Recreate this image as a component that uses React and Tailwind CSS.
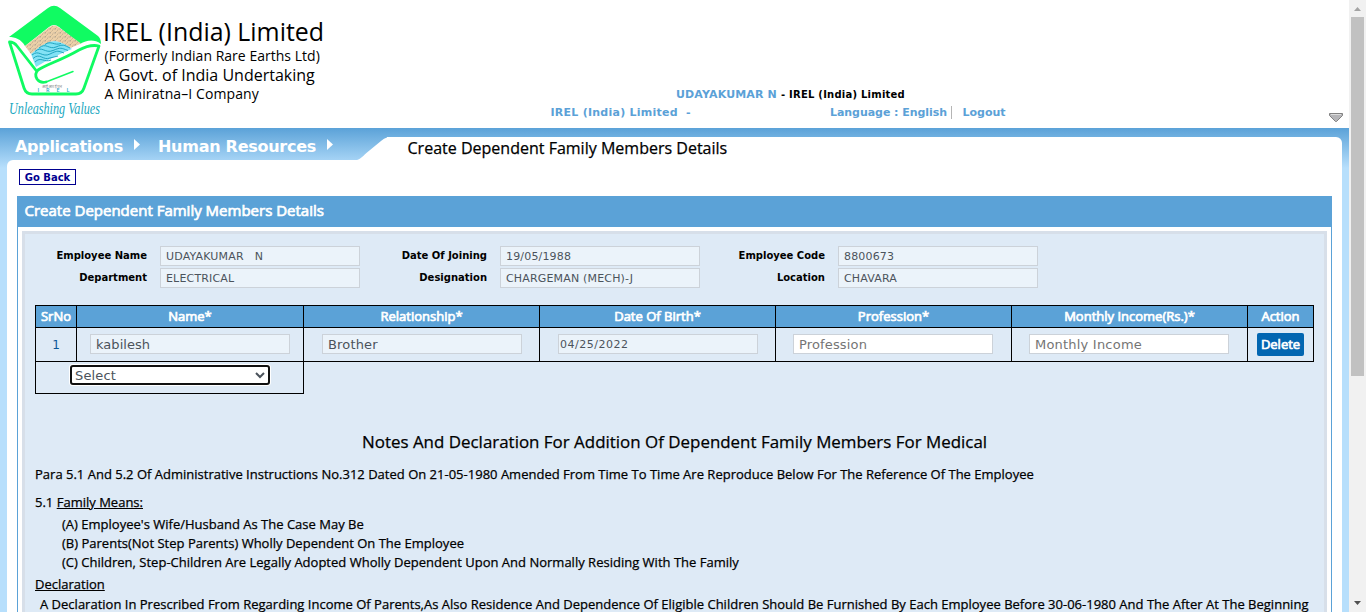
function Logo() {
  return (
    <svg width="104" height="124" viewBox="0 0 104 124" className="block shrink-0 overflow-visible">
      <defs>
        <pattern id="sand" width="5" height="4" patternUnits="userSpaceOnUse">
          <rect width="5" height="4" fill="#ecd0a9" />
          <rect x="0" y="0" width="1" height="1.4" fill="#b5a791" />
          <rect x="2" y="1.6" width="1" height="1.3" fill="#c9b293" />
          <rect x="3.6" y="0.3" width="1" height="1.4" fill="#bbab93" />
          <rect x="1" y="3" width="1" height="1" fill="#d6bd98" />
        </pattern>
      </defs>
      <path d="M9 37 L48 8 Q54 3.5 60 8 L98 36 Q101 38.500 101 44 C94 39 87 40 80 44 L59 27 Q54 23 49 27 L25 46 C21 39 15 37 9 37Z" fill="#10fb62" />
      <path d="M25 46 L49 27.500 Q54 23.500 59 27.500 L81 43.500 L68 49 Q60 39 50 42 Q40 47 31 54Z" fill="url(#sand)" />
      <path d="M31 54 Q45 41 55 41 Q63 42 72 49 Q52 57 36 67Z" fill="#83e2f5" />
      <g fill="none" stroke="#159dba" strokeWidth="0.900">
        <path d="M32 55 C39 49 42 58 50 54 S58 51 64 53" />
        <path d="M35 51.500 C42 45 45 54 53 50.500 S61 48 68 50.500" />
        <path d="M39 48 C46 42 49 50 56 47 S64 45 70 48" />
        <path d="M45 44.500 C51 40 54 46 61 43.500" />
        <path d="M33 58.500 C40 52 43 61 50 58 L58 56" />
        <path d="M35 62 C41 56 44 63 51 60" />
      </g>
      <g fill="none" stroke="#10fb62" strokeWidth="2.800" strokeLinecap="round" strokeLinejoin="round">
        <path d="M36.500 71 L17 46 Q14 42 9.500 42 L24 88 Q26 94 32 94 H76 Q82 94 84 88 L99 46 Q90 44 79 50 C60 61 47 64 38 70 Q34 74 37 79 Q40 83.500 46 82" />
        <path d="M46 82 L73 71.500" strokeWidth="1.500" />
      </g>
      <text x="52" y="87.500" textAnchor="middle" textLength="20" fill="#8b8b8b" className="font-['Noto_Sans'] text-[4px]">आई आर ई एल</text>
      <text x="37.500" y="92" textLength="32" fill="#2aa7c8" className="font-['Open_Sans'] text-[5.5px] font-semibold">IREL</text>
      <text x="9" y="114" textLength="91" lengthAdjust="spacingAndGlyphs" fill="#19a7c0" className="font-['Z003','URW_Chancery_L','Liberation_Serif',cursive] text-[16px] italic">Unleashing Values</text>
    </svg>
  );
}

function Caret() {
  return (
    <svg width="6" height="11" viewBox="0 0 6 11" className="block">
      <path d="M0 0 L6 5.500 L0 11Z" fill="#fff" />
    </svg>
  );
}

function Header() {
  return (
    <header className="flex h-[128px] shrink-0 bg-white">
      <div className="flex w-[550px]">
        <Logo />
        <div className="whitespace-nowrap pt-[16px] font-['Open_Sans',sans-serif] text-black">
          <div className="-ml-px text-[24.900px] leading-[30px]">IREL (India) Limited</div>
          <div className="pl-[0.500px] text-[14px] leading-[19px] tracking-[0.020px]">(Formerly Indian Rare Earths Ltd)</div>
          <div className="pl-[0.500px] text-[16px] leading-[20px]">A Govt. of India Undertaking</div>
          <div className="pl-[0.500px] text-[14px] leading-[17px] tracking-[0.100px]">A Miniratna–I Company</div>
        </div>
      </div>
      <div className="w-[460px] whitespace-nowrap pt-[86px] text-[11px] font-bold leading-[18px] text-[#5ba1d7]">
        <div className="flex pl-[126px]">
          <span className="w-[105px] tracking-[0.150px]">UDAYAKUMAR N</span>
          <span className="text-[10px] tracking-[0.230px] text-black">- IREL (India) Limited</span>
        </div>
        <div className="flex items-center">
          <span className="w-[280px] pl-[0.500px] tracking-[0.250px]">IREL (India) Limited&nbsp; -</span>
          <span className="w-[121px] tracking-[-0.050px]">Language : English</span>
          <span className="-mt-[2px] h-[13px] w-[11.500px] border-l border-[#b5b5b5]" />
          <span>Logout</span>
        </div>
      </div>
      <svg width="14" height="10" viewBox="0 0 14 10" className="ml-auto mr-[6px] mt-[113px]">
        <path d="M0.500 0.500 H13.500 V2.500 L7.500 8.500 H6.500 L0.500 2.500Z" fill="#b5b5b8" stroke="#818181" />
        <path d="M2 1.500 H12" stroke="#ddd" />
      </svg>
    </header>
  );
}

function Nav() {
  return (
    <nav className="flex h-[23px]">
      <div className="flex w-[350px] items-center pl-[8px] text-[16px] font-bold leading-none text-white">
        <span className="-mt-[3px] w-[119px] tracking-[-0.290px]">Applications</span>
        <span className="-mt-[8px] w-[24px]"><Caret /></span>
        <span className="-mt-[3px] w-[169px] tracking-[-0.270px]">Human Resources</span>
        <span className="-mt-[8px]"><Caret /></span>
      </div>
      <svg width="30" height="23" viewBox="0 0 30 23" className="block shrink-0">
        <path d="M0 23 C4 22 7 18 10 15.500 L24 4 Q28 0.500 32 0 V23Z" fill="#fff" />
      </svg>
      <div className="flex-1 rounded-tr-[6px] bg-white pl-[20.500px] font-['Open_Sans',sans-serif] text-[16px] leading-[23px] tracking-[0.010px] text-black [-webkit-text-stroke:0.250px_#000]">
        Create Dependent Family Members Details
      </div>
    </nav>
  );
}

function Field({ label, value }) {
  return (
    <>
      <label className="pr-[13px] text-right text-[10px] font-bold leading-[20px] text-black">{label}</label>
      <div className="h-[20px] w-[200px] whitespace-pre border border-[#ccd2d9] bg-[#ebf3fa] pl-[5px] pt-px text-[11px] leading-[18px] tracking-[0.170px] text-[#4b535c]">{value}</div>
    </>
  );
}

const heads = ["SrNo", "Name*", "Relationship*", "Date Of Birth*", "Profession*", "Monthly Income(Rs.)*", "Action"];

function MembersTable() {
  const box = "mt-[6px] h-[20px] w-[200px] border border-[#ccd2d9] pt-px leading-[18px]";
  const filled = `${box} bg-[#ebf3fa] text-[#4b535c]`;
  const empty = `${box} bg-white text-[#757575]`;
  return (
    <section className="ml-[10px] mt-[17px]">
      <div className="grid w-[1279px] grid-cols-[40px_226px_235px_235px_235px_235px_65px] grid-rows-[21px_33px] gap-px bg-black p-px">
        {heads.map((h) => (
          <div key={h} className="bg-[#5ba2d7] text-center font-['Open_Sans',sans-serif] text-[13px] leading-[21px] text-white [-webkit-text-stroke:0.700px_#fff]">{h}</div>
        ))}
        <div className="bg-[#deeaf6] pt-px text-center text-[12px] leading-[32px] text-[#0b5596]">1</div>
        <div className="bg-[#deeaf6] pl-[13px]"><div className={`${filled} pl-[5px] text-[13px] tracking-[0.050px]`}>kabilesh</div></div>
        <div className="bg-[#deeaf6] pl-[18px]"><div className={`${filled} pl-[5px] text-[13px] tracking-[0.150px]`}>Brother</div></div>
        <div className="bg-[#deeaf6] pl-[18px]"><div className={`${filled} pl-px text-[11px] tracking-[0.500px]`}>04/25/2022</div></div>
        <div className="bg-[#deeaf6] pl-[17px]"><div className={`${empty} pl-[5px] text-[13px] tracking-[0.150px]`}>Profession</div></div>
        <div className="bg-[#deeaf6] pl-[17px]"><div className={`${empty} pl-[5px] text-[13px] tracking-[0.210px]`}>Monthly Income</div></div>
        <div className="bg-[#deeaf6] pl-[9px]">
          <button className="mt-[5px] block h-[23px] w-[47px] rounded-[2px] bg-[#0266b1] text-center font-['Open_Sans',sans-serif] text-[13px] leading-[23px] text-white [-webkit-text-stroke:0.700px_#fff]">Delete</button>
        </div>
      </div>
      <div className="h-[32px] w-[269px] border border-t-0 border-black pl-[34px] pt-[3px]">
        <div className="flex h-[20px] w-[200px] items-center justify-between rounded-[3px] border-2 border-[#101010] bg-white pl-[3px] pr-[3px] text-[13px] leading-[16px] tracking-[0.150px] text-[#4b535c] shadow-[0_0_0_1px_#fff]">
          <span className="pt-[2px]">Select</span>
          <svg width="10" height="7" viewBox="0 0 10 7"><path d="M1 1 L5 5 L9 1" fill="none" stroke="#4b535c" strokeWidth="2" /></svg>
        </div>
      </div>
    </section>
  );
}

function Notes() {
  return (
    <section className="ml-[10px] whitespace-nowrap pt-[36px] font-['Open_Sans',sans-serif] text-[13px] leading-[19px] tracking-[0.007px] text-black [-webkit-text-stroke:0.250px_#000]">
      <h2 className="pl-[327px] text-[16.920px] leading-[24px]">Notes And Declaration For Addition Of Dependent Family Members For Medical</h2>
      <p className="mt-[11px]">Para 5.1 And 5.2 Of Administrative Instructions No.312 Dated On 21-05-1980 Amended From Time To Time Are Reproduce Below For The Reference Of The Employee</p>
      <p className="mt-[9px]">5.1 <u>Family Means:</u></p>
      <div className="mt-[3px] pl-[27px]">
        <p>(A) Employee's Wife/Husband As The Case May Be</p>
        <p>(B) Parents(Not Step Parents) Wholly Dependent On The Employee</p>
        <p>(C) Children, Step-Children Are Legally Adopted Wholly Dependent Upon And Normally Residing With The Family</p>
      </div>
      <p className="mt-[3px]"><u>Declaration</u></p>
      <p className="mt-px pl-[5px]">A Declaration In Prescribed From Regarding Income Of Parents,As Also Residence And Dependence Of Eligible Children Should Be Furnished By Each Employee Before 30-06-1980 And The After At The Beginning</p>
    </section>
  );
}

function Scrollbar() {
  return (
    <div className="flex w-[17px] flex-col items-center bg-[#f1f1f1]">
      <svg width="7" height="4" viewBox="0 0 7 4" className="mt-[7px]"><path d="M0 4 L3.500 0 L7 4Z" fill="#a3a3a3" /></svg>
      <div className="mt-[6px] h-[359px] w-[13px] bg-[#c1c1c1]" />
      <svg width="7" height="4" viewBox="0 0 7 4" className="mb-[7px] mt-auto"><path d="M0 0 L3.500 4 L7 0Z" fill="#505050" /></svg>
    </div>
  );
}

export default function App() {
  return (
    <div className="flex h-[612px] w-[1366px] overflow-hidden bg-white font-['DejaVu_Sans',sans-serif]">
      <div className="flex w-[1349px] flex-col">
        <Header />
        <div className="flex flex-1 flex-col bg-[#b7dffc] bg-[linear-gradient(#5ba2d8,#b7dffc_40px)] bg-no-repeat px-[7px] pt-[9px]">
          <Nav />
          <main className="flex-1 rounded-tl-[6px] bg-white pl-[10px] pr-[10px] pt-[9px]">
            <button className="ml-[2px] block h-[16px] w-[57px] border border-[#000090] pt-px text-center text-[10px] font-bold leading-[14px] text-[#000090]">Go Back</button>
            <div className="mt-[11px] h-[31px] bg-[#5ba2d7] pl-[7.500px] font-['Open_Sans',sans-serif] text-[15px] leading-[29px] text-white [-webkit-text-stroke:0.700px_#fff]">
              Create Dependent Family Members Details
            </div>
            <div className="h-[385px] border-x border-[#5ba2d7] px-[4px] pt-[4px]">
              <div className="h-[400px] overflow-hidden border-[3px] border-[#d7dfe9] bg-[#deeaf6] pt-[12px]">
                <div className="grid grid-cols-[135px_200px_140px_200px_138px_200px] grid-rows-[20px_20px] gap-y-[2px]">
                  <Field label="Employee Name" value="UDAYAKUMAR   N" />
                  <Field label="Date Of Joining" value="19/05/1988" />
                  <Field label="Employee Code" value="8800673" />
                  <Field label="Department" value="ELECTRICAL" />
                  <Field label="Designation" value="CHARGEMAN (MECH)-J" />
                  <Field label="Location" value="CHAVARA" />
                </div>
                <MembersTable />
                <Notes />
              </div>
            </div>
          </main>
        </div>
      </div>
      <Scrollbar />
    </div>
  );
}
